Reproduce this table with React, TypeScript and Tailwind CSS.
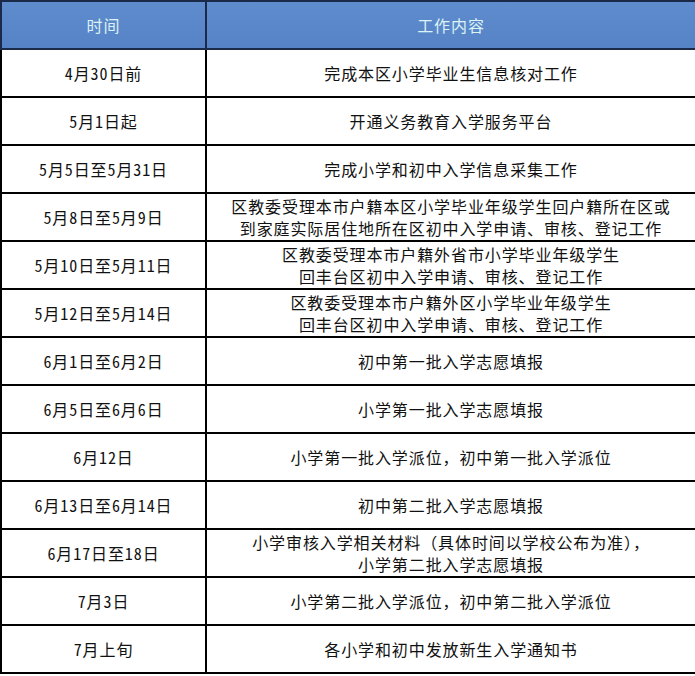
import React from "react";

const rows: [string, string[]][] = [
  ["4月30日前", ["完成本区小学毕业生信息核对工作"]],
  ["5月1日起", ["开通义务教育入学服务平台"]],
  ["5月5日至5月31日", ["完成小学和初中入学信息采集工作"]],
  ["5月8日至5月9日", ["区教委受理本市户籍本区小学毕业年级学生回户籍所在区或", "到家庭实际居住地所在区初中入学申请、审核、登记工作"]],
  ["5月10日至5月11日", ["区教委受理本市户籍外省市小学毕业年级学生", "回丰台区初中入学申请、审核、登记工作"]],
  ["5月12日至5月14日", ["区教委受理本市户籍外区小学毕业年级学生", "回丰台区初中入学申请、审核、登记工作"]],
  ["6月1日至6月2日", ["初中第一批入学志愿填报"]],
  ["6月5日至6月6日", ["小学第一批入学志愿填报"]],
  ["6月12日", ["小学第一批入学派位，初中第一批入学派位"]],
  ["6月13日至6月14日", ["初中第二批入学志愿填报"]],
  ["6月17日至18日", ["小学审核入学相关材料（具体时间以学校公布为准），", "小学第二批入学志愿填报"]],
  ["7月3日", ["小学第二批入学派位，初中第二批入学派位"]],
  ["7月上旬", ["各小学和初中发放新生入学通知书"]],
];

export default function App() {
  return (
    <div
      className="w-[695px] h-[676px] bg-white overflow-hidden text-[16px] tracking-[0.9px] font-light text-[#111]"
      style={{ fontFamily: '"Noto Sans Mono CJK SC", "Noto Sans CJK SC", sans-serif' }}
    >
      <div className="flex h-[50px] bg-gradient-to-b from-[#5f8ccd] to-[#5583c6] border-t-2 border-b-2 border-[#1c2a4a] text-[#dcf2f4] font-normal">
        <div className="w-[207px] shrink-0 border-l-2 border-r-2 border-[#1c2a4a] flex items-center justify-center">
          时间
        </div>
        <div className="flex-1 flex items-center justify-center">工作内容</div>
      </div>
      {rows.map(([date, lines], i) => (
        <div key={i} className="flex h-[48px] border-b-[2.5px] border-black">
          <div className="w-[207px] shrink-0 border-l-2 border-r-[2.5px] border-black flex items-center justify-center">
            {date}
          </div>
          <div className="flex-1 flex flex-col items-center justify-center leading-[22px] text-center">
            {lines.map((l, j) => (
              <div key={j}>{l}</div>
            ))}
          </div>
        </div>
      ))}
    </div>
  );
}
